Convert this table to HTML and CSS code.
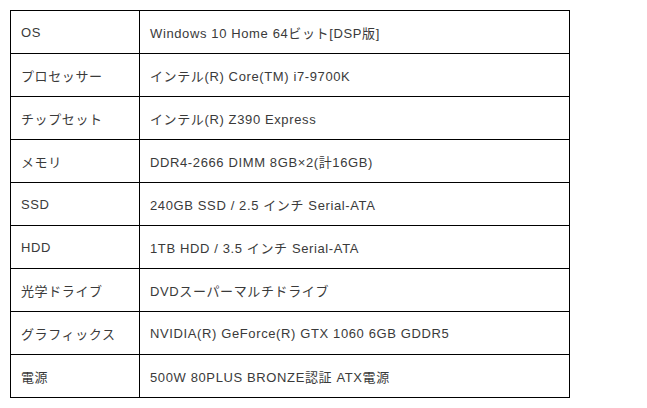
FILE: index.html
```html
<!DOCTYPE html>
<html lang="ja">
<head>
<meta charset="utf-8">
<link rel="stylesheet" href="styles.css">
</head>
<body>
<table class="spec">
<colgroup><col class="c-label"><col class="c-value"></colgroup>
<tbody>
<tr><td>OS</td><td>Windows 10 Home 64ビット[DSP版]</td></tr>
<tr><td>プロセッサー</td><td>インテル(R) Core(TM) i7-9700K</td></tr>
<tr><td>チップセット</td><td>インテル(R) Z390 Express</td></tr>
<tr><td>メモリ</td><td>DDR4-2666 DIMM 8GB×2(計16GB)</td></tr>
<tr><td>SSD</td><td>240GB SSD / 2.5 インチ Serial-ATA</td></tr>
<tr><td>HDD</td><td>1TB HDD / 3.5 インチ Serial-ATA</td></tr>
<tr><td>光学ドライブ</td><td>DVDスーパーマルチドライブ</td></tr>
<tr><td>グラフィックス</td><td>NVIDIA(R) GeForce(R) GTX 1060 6GB GDDR5</td></tr>
<tr><td>電源</td><td>500W 80PLUS BRONZE認証 ATX電源</td></tr>
</tbody>
</table>
</body>
</html>
```
FILE: styles.css
```css
html, body {
  margin: 0;
  padding: 0;
  background: #fff;
}
body {
  padding: 10px;
  font-family: "Liberation Sans", "Noto Sans CJK JP", sans-serif;
  font-size: 13px;
  letter-spacing: 0.62px;
  color: #3a3a3a;
}
.spec {
  border-collapse: collapse;
  table-layout: fixed;
  width: 560px;
}
.c-label { width: 129px; }
.spec td {
  border: 1px solid #000;
  height: 43px;
  padding: 0 10px;
  box-sizing: border-box;
  vertical-align: middle;
  white-space: nowrap;
}
```
